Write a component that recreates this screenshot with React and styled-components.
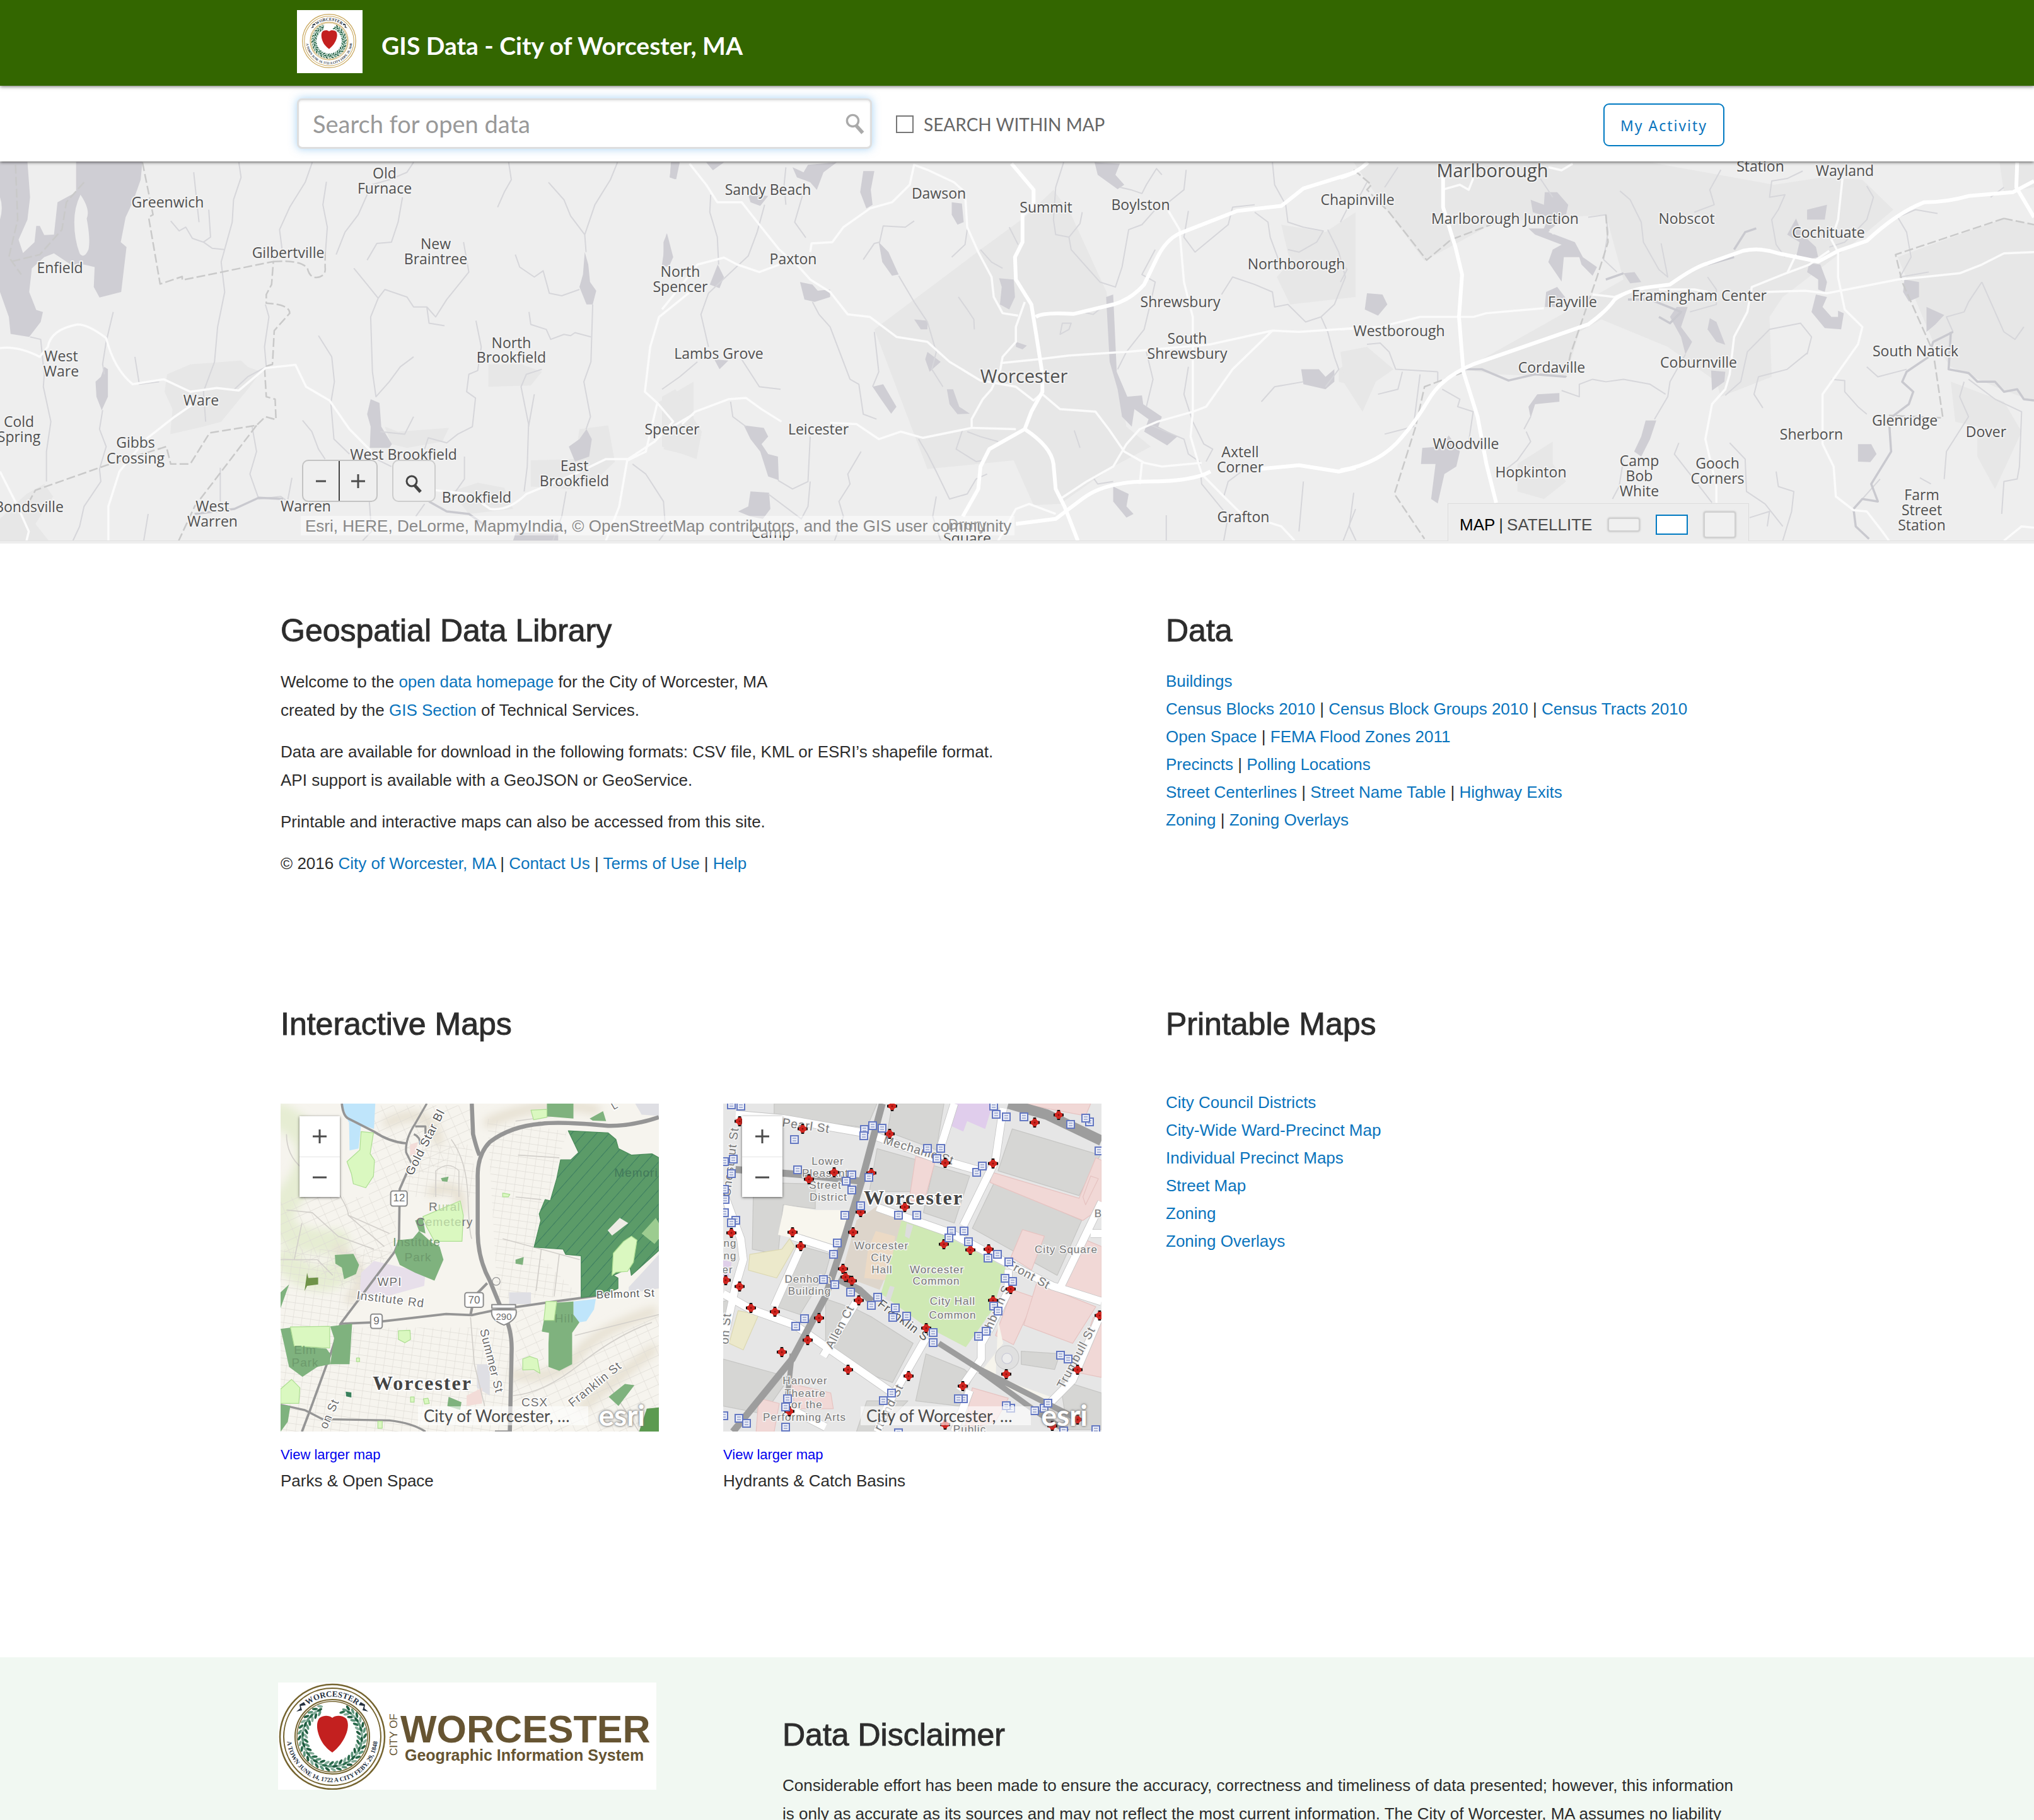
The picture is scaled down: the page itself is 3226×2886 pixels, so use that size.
import React from "react";
import styled, { createGlobalStyle } from "styled-components";

const sans = `"Liberation Sans", Arial, sans-serif`;
const humanist = `Lato, "Open Sans", sans-serif`;
const mapFont = `"Open Sans", "Noto Sans", sans-serif`;

const GlobalStyle = createGlobalStyle`
  *, *::before, *::after { box-sizing: border-box; }
  body { margin: 0; background: #fff; color: #2c2c2c; font-family: ${sans}; font-size: 26px; line-height: 44px; }
  button, input { font: inherit; color: inherit; }
  h1, h2, p, ul, figure { margin: 0; padding: 0; }
`;

const Page = styled.div`
  height: 100vh;
  overflow: auto;
  scrollbar-width: none;
`;

const Container = styled.div`
  width: 100%;
  max-width: 2336px;
  margin: 0 auto;
  padding: 0 ${(p) => p.$inset || 0}px;
`;

const TopBar = styled.header`
  position: relative;
  background: #336600;
  box-shadow: 0 1px 6px rgba(0, 0, 0, 0.6);
  z-index: 2;
`;

const Brand = styled(Container)`
  display: flex;
  align-items: center;
  gap: 30px;
  height: 136px;
`;

const BrandLogo = styled.svg`
  display: block;
  width: 104px;
  height: 100px;
  background: #fff;
  margin-bottom: 4px;
`;

const BrandTitle = styled.h1`
  color: #fff;
  font: 700 39px/48px ${humanist};
  padding-top: 8px;
`;

const SearchBar = styled.div`
  position: relative;
  background: #fff;
  box-shadow: 0 1px 5px rgba(0, 0, 0, 0.7);
  z-index: 1;
`;

const SearchRow = styled(Container)`
  display: flex;
  align-items: center;
  height: 120px;
`;

const SearchBox = styled.label`
  display: flex;
  align-items: center;
  width: 912px;
  height: 80px;
  padding: 0 6px 0 22px;
  border: 3px solid #dedede;
  border-radius: 8px;
  box-shadow: 0 0 14px rgba(82, 168, 236, 0.5), inset 0 2px 3px rgba(0, 0, 0, 0.06);
  background: #fff;
`;

const SearchInput = styled.input`
  flex: 1;
  border: 0;
  outline: 0;
  padding: 0;
  background: none;
  font: 400 38px/48px ${humanist};
  color: #555;
  &::placeholder { color: #999; opacity: 1; }
`;

const Within = styled.label`
  display: flex;
  align-items: center;
  gap: 16px;
  margin-left: 38px;
  padding-top: 2px;
  font: 400 28px/36px ${humanist};
  color: #666;
`;

const Tick = styled.input`
  appearance: none;
  width: 28px;
  height: 28px;
  margin: 0;
  border: 2px solid #777;
  background: #fff;
`;

const Activity = styled.button`
  width: 192px;
  height: 68px;
  margin: 4px 20px 0 auto;
  padding: 2px 0 0;
  border: 2px solid #007ac2;
  border-radius: 9px;
  background: #fff;
  color: #0a74bd;
  font: 400 23px/32px "Noto Sans", sans-serif;
  letter-spacing: 2px;
`;

const MapHero = styled.section`
  position: relative;
  height: 606px;
  background: #eee;
  overflow: hidden;
`;

const HeroMap = styled.svg`
  display: block;
  width: 100%;
  height: 602px;
  border-bottom: 1px solid #e2e2e2;
`;

const HeroOverlay = styled.div`
  position: absolute;
  inset: 0;
`;

const HeroTools = styled(Container)`
  display: flex;
  justify-content: space-between;
  align-items: flex-end;
  height: 602px;
  padding: 0 7px 0 32px;
`;

const LeftTools = styled.div`
  display: flex;
  flex-direction: column;
  gap: 22px;
  padding-bottom: 9px;
`;

const ToolRow = styled.div`
  display: flex;
  gap: 23px;
  padding-left: 2px;
`;

const ButtonPair = styled.div`
  display: flex;
  border: 2px solid #c3c3c3;
  border-radius: 10px;
  background: rgba(238, 238, 238, 0.85);
`;

const PairButton = styled.button`
  width: 58px;
  height: 63px;
  padding: 0;
  border: 0;
  background: none;
  &:first-child { border-right: 2px solid #444; }
  svg { display: block; margin: auto; }
`;

const LocateButton = styled.button`
  width: 69px;
  height: 67px;
  padding: 8px 0 0;
  border: 2px solid #cdcdcd;
  border-radius: 10px;
  background: rgba(238, 238, 238, 0.85);
  svg { display: block; margin: auto; }
`;

const Attribution = styled.p`
  padding: 2px 5px 0 7px;
  background: rgba(255, 255, 255, 0.45);
  color: #888;
  font: 400 26px/29px ${sans};
`;

const Basemap = styled.div`
  display: flex;
  align-items: center;
  width: 478px;
  height: 60px;
  padding: 6px 0 0 18px;
  border: 1px solid #dcdcdc;
  border-bottom: 0;
  background: #ededed;
  font: 400 26px/32px ${sans};
`;

const BasemapButton = styled.button`
  padding: 0;
  border: 0;
  background: none;
  color: ${(p) => (p.$active ? "#000" : "#4c4c4c")};
`;

const Bar = styled.span`
  padding: 0 6px;
`;

const SizeButton = styled.button`
  width: 51px;
  height: ${(p) => p.$h}px;
  margin-left: 25px;
  padding: 0;
  border: ${(p) => (p.$active ? "2px solid #007ac2" : "2px solid #d0d0d0")};
  border-radius: ${(p) => (p.$active ? 0 : 4)}px;
  background: ${(p) => (p.$active ? "#fff" : "#f0f0f0")};
  box-shadow: ${(p) => (p.$active ? "none" : "0 0 3px #b4b4b4")};
`;

const Columns = styled.div`
  display: grid;
  grid-template-columns: 1302fr 932fr;
  column-gap: 102px;
  align-items: start;
  padding-top: 110px;
  min-height: ${(p) => p.$min}px;
`;

const Heading = styled.h2`
  font: 400 50px/56px ${sans};
  -webkit-text-stroke: 1px #323232;
  margin-bottom: ${(p) => p.$after}px;
`;

const Para = styled.p`
  line-height: 45px;
  & + & { margin-top: 21px; }
`;

const Link = styled.a`
  color: #0a74bd;
  text-decoration: none;
`;

const LinkList = styled.ul`
  list-style: none;
`;

const Cards = styled.div`
  display: grid;
  grid-template-columns: 1fr 1fr;
  column-gap: 102px;
`;

const MapFrame = styled.div`
  position: relative;
  height: 520px;
  overflow: hidden;
  background: #f5f3ee;
`;

const CardMap = styled.svg`
  display: block;
  width: 100%;
  height: 100%;
`;

const ZoomStack = styled.div`
  position: absolute;
  left: 30px;
  top: 20px;
  width: 64px;
  background: #fff;
  box-shadow: 0 1px 4px rgba(0, 0, 0, 0.6);
`;

const ZoomButton = styled.button`
  display: flex;
  align-items: center;
  justify-content: center;
  width: 64px;
  height: 64px;
  padding: 0;
  border: 0;
  background: #fff;
  & + & { border-top: 1px solid #e4e4e4; }
`;

const Credit = styled.div`
  position: absolute;
  right: 112px;
  bottom: 10px;
  width: 270px;
  padding-left: 9px;
  background: rgba(255, 255, 255, 0.6);
  color: #4c4c4c;
  font: 400 26px/30px ${humanist};
`;

const EsriMark = styled.span`
  position: absolute;
  right: 22px;
  bottom: 2px;
  color: #fff;
  font: 700 46px/48px ${humanist};
  text-shadow: 0 0 4px #777, 0 0 3px #888;
`;

const Larger = styled.a`
  display: block;
  margin-top: 20px;
  color: #0000ee;
  text-decoration: none;
  font: 400 22px/34px ${sans};
`;

const Caption = styled.figcaption`
  margin-top: 2px;
`;

const Foot = styled.footer`
  background: #f1f8f2;
`;

const FootRow = styled(Container)`
  display: grid;
  grid-template-columns: 600px 1fr;
  column-gap: 200px;
  align-items: start;
  max-width: 2344px;
`;

const FootLogo = styled.svg`
  display: block;
  width: 600px;
  height: 170px;
  margin-top: 40px;
  background: #fff;
`;

const FootText = styled.div`
  padding-top: 95px;
`;

/* ---------- drawings ---------- */

const Plus = () => (
  <svg width="24" height="24" viewBox="0 0 24 24" aria-hidden="true">
    <path d="M12 1V23M1 12H23" stroke="#4c4c4c" strokeWidth="3" fill="none" />
  </svg>
);
const Minus = ({ w = 24 }) => (
  <svg width={w} height="24" viewBox={`0 0 ${w} 24`} aria-hidden="true">
    <path d={`M1 12H${w - 1}`} stroke="#4c4c4c" strokeWidth="3" fill="none" />
  </svg>
);
const Lens = ({ color, size = 30 }) => (
  <svg width={size} height={size} viewBox="0 0 30 30" aria-hidden="true">
    <circle cx="11" cy="11" r="8" fill="none" stroke={color} strokeWidth="3" />
    <path d="M16 18L25 28" stroke={color} strokeWidth="5" fill="none" />
  </svg>
);

const leaves = Array.from({ length: 96 }, (_, i) => {
  const ring = i % 3;
  const a = ((-68 + (i / 95) * 316) * Math.PI) / 180;
  const r = 42 + ring * 5;
  return { x: 86 + r * Math.cos(a), y: 86 + r * Math.sin(a), t: (a * 180) / Math.PI + 50 + ring * 35, c: i % 4 };
});

const Seal = ({ id, ring }) => (
  <g>
    <circle cx="86" cy="86" r="83" fill="#fff" stroke={ring} strokeWidth="2.5" />
    <circle cx="86" cy="86" r="77" fill="none" stroke={ring} strokeWidth="2" />
    <circle cx="86" cy="86" r="59" fill="none" stroke={ring} strokeWidth="2" />
    <circle cx="86" cy="86" r="56" fill="none" stroke={ring} strokeWidth="1.5" />
    {leaves.map((l, i) => (
      <ellipse key={i} cx={l.x} cy={l.y} rx="4.6" ry="2" transform={`rotate(${l.t} ${l.x} ${l.y})`} fill={["#2a6b4c", "#5e957c", "#1f5c40", "#86ae9b"][l.c]} />
    ))}
    <path d="M86 56C80 51 70 52 65 57C58 68 64 87 73 99C78 105 82 108 86 111C91 107 95 103 99 98C108 86 115 68 108 57C102 52 92 51 86 56Z" fill="#c3201f" />
    <path id={`${id}-top`} d="M22.5 86A63.5 63.5 0 0 1 149.5 86" fill="none" />
    <path id={`${id}-low`} d="M22 53A72 72 0 1 0 150 53" fill="none" />
    <g fontFamily="Liberation Serif, serif" fontWeight="700" fill="#26313f" textAnchor="middle">
      <text fontSize="13"><textPath href={`#${id}-top`} startOffset="50%">WORCESTER</textPath></text>
      <text fontSize="10"><textPath href={`#${id}-low`} startOffset="50%">A TOWN JUNE 14, 1722 A CITY FEBY. 29, 1848</textPath></text>
      <path d="M29 46l9-2-2-7 8-1-3-5-7 4 1 6zM143 46l-9-2 2-7-8-1 3-5 7 4-1 6z" />
    </g>
  </g>
);

/* Each sheet of the regional basemap is digitised on its own grid. */
const SX = 1100 / 1568;
const SY = 620 / 1568;
const sheets = [
  {
    ox: 0,
    urban: [
      "M372 940L378 870L430 830L545 815L560 840L590 860L560 930L500 1060L460 1080L385 1110L390 1010Z",
      "M1104 830L1180 830L1225 860L1200 915L1104 920Z",
      "M870 1080L900 1100L1015 1085L1000 1140L920 1165L885 1150Z",
      "M1200 1215L1300 1210L1310 1090L1375 1075L1390 1220L1350 1290L1290 1330L1200 1320Z",
      "M0 1450L60 1350L100 1310L120 1360L80 1470L110 1537L0 1537Z",
      "M1020 1340L1080 1305L1140 1325L1160 1410L1060 1430Z",
      "M1486 985L1568 900V1200L1500 1170L1525 1050Z",
    ],
    water: [
      "M0 18L62 18L68 160L62 250L42 330L52 384L78 340L82 275L90 275L100 312L122 310L130 180L172 140L172 18L322 18L318 90L300 180L284 240L273 340L286 360L274 540L225 562L212 520L214 440L190 430L160 430L122 385L100 400L72 445L66 540L82 612L97 620L92 660L66 720L24 708L20 640L0 540Z",
      "M236 840L244 850L244 960L230 1014L218 960L216 900L228 880Z",
      "M838 970L858 985L862 1080L886 1150L880 1165L836 1165L838 1080L830 1030Z",
      "M1326 1090L1338 1130L1332 1200L1300 1220L1286 1160L1310 1130Z",
      "M1322 380L1330 430L1334 500L1348 535L1340 590L1326 590L1310 520L1318 470Z",
      "M1508 305L1522 400L1512 440L1500 430L1500 340Z",
      "M1518 20L1536 20L1526 88L1514 80Z",
      "M1160 1537L1166 1505L1262 1510L1262 1537Z",
    ],
    isles: ["M182 150Q205 210 196 245Q205 330 200 370Q190 410 180 385Q168 330 168 260Q168 200 182 150Z", "M0 160Q8 200 0 250Z"],
    streams: [
      "M540 20L545 80L528 170L525 260L500 420L508 540L492 680L485 820L460 940L465 1060",
      "M706 20L690 100L655 200L632 290L640 400M738 98L730 190L740 280L735 400",
      "M935 20L920 60L880 90L840 110L810 230L780 300L760 390M910 160L900 260L885 340L852 345L830 412",
      "M438 60L445 180L450 260M472 210L476 320L460 340M386 255L405 295L420 280L435 325L460 340L480 365L508 370",
      "M1150 20L1156 90L1140 140L1125 200M1396 20L1380 90L1345 190L1322 310L1290 235L1275 170L1240 100M1322 310L1325 380M1340 590L1336 820L1320 900L1335 1040L1325 1090",
      "M800 445L830 510L855 565L838 640L842 860L850 960L880 900L905 840L935 800M855 565L870 530L920 560L935 600L965 600L985 640L1010 570L1060 460L1048 340M965 600L970 665L1005 675",
      "M1165 390L1175 440L1208 480L1228 455L1242 545L1270 555L1310 530M1196 620L1200 670L1235 690L1245 730L1275 710L1290 715L1300 703L1336 720",
      "M1076 655L1088 760L1080 855L1060 870L1055 940L1075 965L1068 1080L1035 1110L1010 1145L968 1125L960 1170",
      "M1225 850L1190 870L1178 920L1195 1070L1192 1240L1185 1340M1208 950L1195 1080",
      "M256 620L240 740L232 830L236 870M232 1014L225 1090L240 1160L225 1250L228 1300L190 1400L180 1480L165 1537",
      "M68 720L92 730L100 870L98 920L115 1060L105 1180L105 1300",
      "M305 800L315 910L360 900M720 715L750 800L756 900L748 985L755 1130L790 1190M684 1055L705 1100L720 1170L735 1210M600 590L608 640L598 760L602 840L560 880L530 930",
      "M498 1245L498 1380M570 1080L580 1180L565 1270L585 1370L635 1360L650 1380L660 1285M335 1430L325 1537",
      "M860 1100L915 1110L935 1040M850 1210L885 1240M1050 1200L1050 1290L1030 1340M835 1380L840 1500L820 1537M1280 1340L1270 1440L1250 1537M1430 1230L1460 1270L1500 1380L1505 1500L1490 1537M970 1380L1010 1420L1060 1430M940 1440L960 1390",
    ],
    rivers: ["M440 1430L530 1410L585 1365L640 1370", "M970 1380L1010 1420L1060 1430L1100 1480"],
    boundary: [
      "M322 20L346 230L336 240L362 508L412 478L412 492L618 418L614 510L602 550L602 585Q655 590 655 625L620 695L616 830L598 840L602 960L622 970L624 1052L600 1040L580 1075L474 1105L430 1230L386 1230L376 1160L240 1235L80 1335L60 1400",
      "M580 1075L440 1400L404 1537",
      "M618 418Q680 410 695 445Q700 482 715 482Q738 478 735 440L735 370",
      "M35 30L40 250L20 400L48 470M190 100L150 180L140 290L90 390L20 420",
    ],
    roads: [
      "M0 765Q40 755 90 800L108 760Q115 690 175 670Q200 670 240 725Q258 850 300 910L370 890L430 940L490 925L540 935L600 845L668 832L692 920L745 975L790 1090L840 1180",
      "M440 985L395 1040L330 1130L270 1260L245 1400L245 1537M0 1260L40 1400L65 1500L60 1537",
      "M985 1335L1060 1350L1108 1410Q1150 1420 1190 1350L1300 1270L1370 1210L1420 1210L1480 1140L1522 1060L1486 985L1458 940L1470 760L1490 640L1560 540M1418 1215L1400 1400L1370 1537M1486 985L1460 1180L1420 1215M1500 1100L1568 1030",
    ],
    highways: [],
    labels: [
      [869, 82, "Old"], [869, 142, "Furnace"], [379, 197, "Greenwich"], [652, 400, "Gilbertville"], [985, 365, "New"], [985, 426, "Braintree"],
      [135, 460, "Enfield"], [138, 815, "West"], [138, 876, "Ware"], [1156, 760, "North"], [1156, 820, "Brookfield"], [455, 991, "Ware"],
      [43, 1078, "Cold"], [43, 1137, "Spring"], [306, 1162, "Gibbs"], [306, 1224, "Crossing"], [912, 1210, "West Brookfield"],
      [1298, 1255, "East"], [1298, 1315, "Brookfield"], [1078, 1382, "Brookfield"], [481, 1416, "West"], [481, 1477, "Warren"],
      [692, 1416, "Warren"], [66, 1420, "Bondsville"],
    ],
  },
  {
    ox: 1050,
    urban: [
      "M885 130L925 230L1005 540L1030 900L1050 1080L1105 1160L1020 1240L900 1390L840 1395L795 1215L600 1250L570 1110L480 690L720 370L820 240Z",
      "M1400 270L1500 300L1568 220V560L1420 590L1390 480L1420 420Z",
      "M0 960L30 930L90 1100L78 1210L0 1160Z",
      "M1530 850L1568 800V920L1530 900Z",
    ],
    water: [
      "M100 20L140 20L115 52Z", "M20 20L40 20L32 88L18 80Z",
      "M295 40L320 60L330 30L395 20L365 60L350 130L335 100L305 80Z",
      "M455 55L480 55L472 130L476 190L462 205L448 140Z",
      "M655 180L678 185L682 260L668 270L655 230Z",
      "M490 340L512 380L535 470L520 475L498 420Z",
      "M312 500L340 510L352 535L380 530L380 560L345 580L322 570Z",
      "M762 485L795 490L798 560L785 610L764 590L768 520Z",
      "M978 20L1035 25L1025 70L1045 110L1030 128L985 70Z",
      "M10 305L22 400L12 440L0 430Z", "M126 430L140 480L130 525L108 510Z",
      "M476 920L500 910L530 1000L518 1028L495 970Z",
      "M644 930L658 930L672 1000L696 1028L668 1030L650 990Z",
      "M185 1075L230 1085L240 1120L225 1150L240 1190L262 1200L264 1295L240 1280L222 1180L200 1130Z",
      "M200 1340L242 1345L245 1410L228 1450L200 1440L172 1420L195 1400Z",
      "M1004 560L1020 550L1028 860L1052 960L1085 955L1088 990L1130 1040L1122 1080L1165 1120L1142 1155L1090 1100L1100 1050L1068 1010L1062 1080L1040 1040L1030 930L1012 820Z",
      "M1445 850L1485 850L1500 880L1520 850L1520 900L1500 930L1450 910Z",
      "M1020 1320L1055 1350L1050 1400L1066 1430L1050 1445L1020 1380Z",
      "M570 650L600 655L600 690L585 690ZM600 780L630 820L605 860L595 810ZM800 740L825 755L815 770L800 760Z",
      "M118 810L150 815L130 850Z", "M195 150L240 155L222 195L200 180Z",
    ],
    isles: [],
    streams: [
      "M110 150L108 220L125 320L128 430M232 190L215 300L195 395L150 470L105 545L88 630L105 760M280 40L276 110L280 190M318 150L300 260L325 322",
      "M455 410L480 345L492 340L500 275L550 280L570 255M535 475L570 580L600 660L620 780L610 850L635 920M340 580L355 630L380 680L425 890L445 910L455 1030L485 1050",
      "M785 280L805 350M690 290L685 350L655 400M720 370L745 420L770 445M670 560L690 610L705 650L706 690",
      "M908 20L890 120L885 250L890 310L920 320L945 265L950 220M920 320L925 370L960 440L990 500L1025 520L1040 440L1055 290L1085 270L1120 200",
      "M1035 120L1060 130L1085 145L1095 110L1118 45L1130 70M1185 50L1180 130L1145 180M1190 215L1180 320L1205 380L1280 270L1290 200L1340 190M1115 370L1085 470L1115 500L1105 580L1090 690L1050 780L1030 850",
      "M1380 20L1385 110L1410 190L1415 260L1450 280L1495 295L1480 340L1440 380L1415 370M1340 220L1370 260L1375 320L1400 440M1505 290L1530 380L1545 480L1520 590L1490 640L1455 660L1415 590L1385 600L1380 540L1340 510L1290 480L1265 550",
      "M1490 640L1505 700L1520 800L1530 850L1500 920M1355 980L1385 920L1450 900M1190 840L1180 950L1200 1060L1225 1150L1245 1170L1230 1220",
      "M155 980L160 1040L190 1080M80 820L40 880L0 930M180 810L220 920L268 930M262 1295L295 1330L330 1300L335 1120M335 1300L330 1400L315 1450L240 1350M450 1180L420 1270L425 1310L400 1380L410 1440L390 1537",
      "M580 1130L600 1190L620 1260L650 1370L690 1350L710 1290L735 1270M680 1090L665 1170L710 1220L725 1215M690 1100L720 1120L760 1140M932 1095L945 1165",
      "M975 1285L985 1310L1020 1300M1100 1070L1180 1130L1190 1190L1215 1220L1220 1310L1280 1440L1270 1537M1310 1260L1280 1300L1270 1360M620 1360L612 1440L630 1537M1140 1435V1537M1450 1300L1440 1500M1568 1410L1540 1537",
      "M905 665L925 665L920 690L900 710ZM1095 780L1110 890L1095 1000M950 620L975 630L995 600M480 700L490 860L476 920",
    ],
    rivers: [],
    boundary: [],
    roads: [
      "M62 25L100 110L125 180L180 180L220 270L265 370L310 440L335 490L380 540L420 630L470 640L530 720L600 740L650 820L720 895L800 920L840 975L860 945",
      "M0 610Q50 500 80 430L140 402L170 430L220 460L265 430M335 380L338 345L385 340L410 280L470 205L520 180L560 110L570 30L600 50L660 100L685 140L690 280L715 380L745 480L750 560L770 625L805 635",
      "M820 580L800 680L800 740L770 800L765 850L745 930L725 970L700 1050L700 1085L590 1125L540 1100L490 1130L440 1070L380 1065M45 1070L75 1020L150 970L190 965L225 1010L270 1060",
      "M765 825L850 810L920 795L1050 780L1240 750L1380 695L1440 700L1568 685M1380 695L1290 850L1230 1000L1200 1020L1120 1060L1080 1090L1050 1150L1020 1240L960 1300L900 1370",
      "M1145 215L1170 290L1180 500L1200 640L1200 1020M700 1085L800 1090M860 950L900 1010L980 1020L1010 1090L1045 1180L1090 1225L1130 1240L1220 1225M1200 1020L1195 1120L1220 1270L1270 1360L1310 1430L1400 1480L1430 1537M1085 1225L1080 1310",
      "M760 1537L800 1410L830 1390L890 1430",
    ],
    highways: [
      "M790 25L840 130L840 190L815 230L815 340L798 400L800 490L835 590L845 700L860 870L860 940L835 1020L820 1090Q880 1160 885 1230L890 1330L910 1400L940 1537",
      "M820 1090L740 1170L720 1240L715 1330L680 1440",
      "M845 640Q860 620 930 628L1020 590Q1060 570 1090 510L1120 400Q1140 330 1170 305L1300 215L1400 195L1450 125L1568 60",
      "M800 1470L890 1450L950 1370Q1000 1300 1100 1300Q1200 1300 1240 1260M1350 1250L1440 1235L1530 1260L1568 1245",
    ],
    labels: [
      [240, 147, "Sandy Beach"], [626, 163, "Dawson"], [868, 218, "Summit"], [1082, 208, "Boylston"], [296, 426, "Paxton"], [41, 476, "North"], [41, 537, "Spencer"],
      [1434, 444, "Northborough"], [1172, 597, "Shrewsbury"], [1187, 743, "South"], [1187, 805, "Shrewsbury"], [129, 804, "Lambs Grove"],
      [818, 900, "Worcester", 29], [23, 1107, "Spencer"], [354, 1107, "Leicester"], [1307, 1198, "Axtell"], [1307, 1259, "Corner"],
      [1314, 1460, "Grafton"], [247, 1522, "Camp"], [690, 1490, "Drury"], [690, 1546, "Square"],
    ],
  },
  {
    ox: 2126,
    urban: [
      "M30 20L700 20L980 110L1090 80L1180 90L1250 210L1170 330L1000 560L970 640L975 880L860 960L850 900L740 760L590 650L540 700L510 880L350 870L280 850L640 490L600 230L420 250L340 270L190 415L100 200Z",
      "M1290 380L1500 245L1568 270V980L1480 920L1380 840L1340 740L1260 400Z",
      "M0 780L60 760L120 850L80 900L50 1020L10 910Z",
      "M1380 900L1500 980L1540 1100L1480 1330L1440 1200L1440 1080L1390 1060Z",
      "M400 1230L480 1140L480 1230L510 1300L460 1370L400 1340Z",
      "M1490 20L1568 20V120L1500 140Z",
    ],
    water: [
      "M430 170L460 190L462 140L490 140L515 190L510 230L470 300L500 320L530 340L548 400L580 440L570 475L545 430L540 400L505 400L500 498L470 420L480 370L500 350L440 310L425 285L460 285L470 240L435 220Z",
      "M60 545L95 550L106 590L85 635L55 610Z",
      "M465 540L490 520L512 570L500 600L462 600Z",
      "M1055 210L1100 190L1095 250L1055 250Z",
      "M1030 245L1045 310L1075 360L1080 400L1055 410L1030 400L1038 340L1010 310Z",
      "M1060 425L1085 430L1100 500L1095 540L1080 530L1080 490L1055 460Z",
      "M1075 550L1100 560L1090 600L1110 640L1125 640L1125 615L1138 625L1132 690L1095 685L1065 620Z",
      "M835 645L850 660L870 752L850 740L830 690Z", "M838 855L870 860L868 900L840 935Z",
      "M1275 490L1308 500L1308 560L1285 578L1272 540Z", "M1325 600L1365 632L1345 670L1325 700Z",
      "M690 1055L714 1055L700 1130L680 1200L664 1180L680 1120Z",
      "M445 950L495 945L495 980L440 990L430 1045L425 1000Z",
      "M185 1165L225 1160L245 1115L270 1180L262 1240L235 1270L220 1388L205 1370L215 1230L182 1230Z",
      "M1170 1150L1200 1150L1212 1190L1198 1222L1170 1220Z",
      "M745 640L760 600L785 600L770 680L795 740L780 790L770 720Z", "M640 465L665 460L680 500L655 505Z",
    ],
    isles: ["M472 290L486 275L495 300L480 310Z"],
    streams: [
      "M632 135L655 170L680 260L685 340L720 450L740 480L725 345M560 240L600 230L605 300L595 410L625 460",
      "M860 50L835 130L845 190L800 220M780 790L745 900L740 960L710 1050M1045 55L1010 85L975 95L970 160L1005 150L990 210L975 250L985 350L1005 400",
      "M1190 115L1205 160L1190 250L1140 340L1105 360M830 480L850 530L850 590L790 620",
      "M60 750L90 745L110 780L125 850L220 860M140 860L130 930L85 950M180 870L165 1080L100 1110M220 860V900M230 930L270 970L265 1000L300 1020L290 1140",
      "M420 1100L430 1140L400 1215L375 1250M415 1090L430 1040M500 935L540 960L540 910L570 890L600 900L640 890L700 910L735 950",
      "M1055 785L1010 850L945 880L935 950L955 1005M870 955L905 900L920 780L970 690L1040 665L1065 720L1055 790M765 1145L755 1190L790 1270L840 1385",
      "M880 1145L915 1210L918 1340L960 1390L1000 1480M985 1260L990 1320L1025 1340L1020 1420L1000 1537M1110 890L1140 895L1140 940L1170 1000L1190 1030M1190 840L1215 880L1280 850M1220 1290L1180 1370",
      "M1410 900L1400 960L1420 1040L1370 1180L1365 1290M1420 890L1480 970L1540 1020L1535 1240L1530 1290L1500 1300L1495 1430M1450 500L1420 580L1410 620L1370 640L1385 700M1450 500L1500 700L1525 730L1545 680",
      "M1350 225L1300 210L1260 240L1280 300L1290 400L1265 480L1330 460M130 40L100 120M60 100L45 150L20 190L0 260M30 1345L20 1480L35 1537M925 1445L970 1420L965 1480M1310 1285L1335 1310",
      "M0 500L15 450L5 430M450 80L480 160M1470 160L1500 120M640 1210L630 1320L615 1370",
    ],
    rivers: [
      "M1385 700L1340 740L1330 800L1280 860L1270 900L1295 940L1285 990L1240 1050L1245 1180L1200 1310L1215 1380L1180 1370L1160 1410L1165 1480L1195 1530",
      "M1380 700L1375 850L1420 865L1440 900L1480 900L1500 940L1530 930L1545 970L1568 975",
      "M720 640L745 665L770 620L700 570L650 570M890 400L830 430M940 285L915 300L890 370M600 490L640 465",
      "M280 850L320 850L380 895L440 870L510 880",
    ],
    boundary: [
      "M30 50L70 110L60 130L110 220L195 412L250 330L340 270M600 230L605 340L580 480L520 790L510 880M280 860L190 920L170 1080L122 1350L190 1530",
      "M1500 245L1255 390L1270 500L1340 780L1362 1045L1240 1035M1500 245L1568 270",
    ],
    roads: [
      "M0 690L90 680L180 640L300 640L330 625L460 605M570 550L620 560L640 545M960 540L1050 535L1100 545L1160 525L1260 490L1400 465L1450 430L1500 385L1568 380",
      "M1135 85L1125 250L1110 330L1125 380L1125 480L1140 610L1180 680L1170 750L1110 900L1090 950L1090 1150L1115 1240L1120 1360L1160 1415L1190 1420L1225 1500L1240 1537",
      "M1105 375L1060 430L1000 470L930 520L920 620L890 720L880 870L870 930L840 990L825 1130L850 1320L850 1385M1500 1537L1540 1480L1568 1485M230 130L270 110L290 130L300 85M1030 390L1010 465M470 40L500 52L525 25M720 530L800 530L830 540",
    ],
    highways: [
      "M0 82Q40 60 62 20", "M232 75L232 200L260 360L275 470L268 640L278 860L310 1040L330 1230L352 1385",
      "M0 1255Q90 1230 140 1120Q170 1060 200 970Q230 880 300 830L560 670Q600 620 620 570Q650 530 700 520L745 510Q800 440 830 425L910 375Q950 360 990 385L1080 418L1125 375L1190 335Q1260 220 1320 180Q1370 180 1420 155L1520 140L1568 95",
      "M1530 20L1528 120L1568 240",
    ],
    labels: [
      [343, 75, "Marlborough", 29], [949, 52, "Station"], [1141, 70, "Wayland"], [38, 187, "Chapinville"], [372, 262, "Marlborough Junction"],
      [783, 262, "Nobscot"], [1103, 319, "Cochituate"], [525, 597, "Fayville"], [811, 571, "Framingham Center"], [132, 713, "Westborough"],
      [477, 860, "Cordaville"], [809, 840, "Coburnville"], [1300, 794, "South Natick"], [284, 1167, "Woodville"], [430, 1280, "Hopkinton"],
      [676, 1234, "Camp"], [676, 1295, "Bob"], [676, 1356, "White"], [852, 1244, "Gooch"], [852, 1305, "Corners"], [1065, 1128, "Sherborn"],
      [1276, 1072, "Glenridge"], [1459, 1118, "Dover"], [1314, 1370, "Farm"], [1314, 1431, "Street"], [1314, 1492, "Station"],
    ],
  },
];

const layers = [
  ["urban", { fill: "#e7e7e7" }],
  ["water", { fill: "#cfced4" }],
  ["isles", { fill: "#eeeeee" }],
  ["streams", { fill: "none", stroke: "#d6d6da", strokeWidth: 2 }],
  ["rivers", { fill: "none", stroke: "#c9c9cf", strokeWidth: 3.5 }],
  ["boundary", { fill: "none", stroke: "#c9c9c9", strokeWidth: 2.5, strokeDasharray: "14 5" }],
  ["roads", { fill: "none", stroke: "#fbfbfb", strokeWidth: 3.5 }],
  ["highways", { fill: "none", stroke: "#ffffff", strokeWidth: 6 }],
];

const RegionMap = () => (
  <HeroMap viewBox="0 0 3226 602" preserveAspectRatio="xMidYMid slice" role="img" aria-label="Map of the Worcester region">
    {layers.map(([name, style]) =>
      sheets.map((s) => (
        <g key={name + s.ox} transform={`translate(${s.ox} -6) scale(${SX} ${SY})`} strokeLinejoin="round" {...style}>
          {s[name].map((d, i) => <path key={i} d={d} vectorEffect="non-scaling-stroke" />)}
        </g>
      ))
    )}
    <g fontFamily={mapFont} fill="#505050" textAnchor="middle" stroke="#f2f2f2" strokeWidth="4" paintOrder="stroke" strokeLinejoin="round">
      {sheets.map((s) => s.labels.map(([x, y, t, size]) => (
        <text key={t + x + y} x={Math.round(s.ox + x * SX)} y={Math.round(y * SY - 5)} fontSize={size || 23}>{t}</text>
      )))}
    </g>
  </HeroMap>
);

const CX = 640 / 1568;
const CY = 650 / 1568;
const at = (ox) => (x, y) => [Math.round((x - ox) * CX), Math.round((y - 43) * CY)];

const MapText = ({ place, x, y, size = 19, rotate = 0, anchor = "middle", children, ...rest }) => {
  const [px, py] = place(x, y);
  return (
    <text x={px} y={py} fontSize={size} textAnchor={anchor} transform={rotate ? `rotate(${rotate} ${px} ${py})` : undefined} {...rest}>
      {children}
    </text>
  );
};

const ParksMap = () => {
  const p = at(37);
  return (
    <CardMap viewBox="0 0 600 520" preserveAspectRatio="xMidYMid slice" role="img" aria-label="Map of parks and open space">
      <defs>
        <pattern id="hatch" width="36" height="36" patternUnits="userSpaceOnUse" patternTransform="rotate(42)">
          <rect width="36" height="36" fill="#5b9b68" />
          <path d="M1 0V36" stroke="#3c7d60" strokeWidth="3" />
        </pattern>
        <pattern id="blocks" width="34" height="27" patternUnits="userSpaceOnUse" patternTransform="rotate(8)">
          <path d="M0 0H34M0 0V27" stroke="#dedbd5" strokeWidth="3" fill="none" />
        </pattern>
        <pattern id="blocks2" width="46" height="34" patternUnits="userSpaceOnUse" patternTransform="rotate(-24)">
          <path d="M0 0H46M0 0V34" stroke="#dedbd5" strokeWidth="3" fill="none" />
        </pattern>
        <filter id="soft"><feGaussianBlur stdDeviation="7" /></filter>
      </defs>
      <rect width="600" height="520" fill="#f6f4ee" />
      <g filter="url(#soft)" fill="none" strokeLinecap="round">
        <path d="M0 20Q80 60 20 140T90 220M10 250Q60 300 100 260" stroke="#e6edd3" strokeWidth="40" />
        <path d="M170 30Q240 0 250 60M240 140Q290 120 285 170M90 230Q150 270 110 310M330 30Q420 -10 500 10M370 430Q440 440 470 400T590 330M480 480L590 390" stroke="#e6e0d1" strokeWidth="16" />
      </g>
      <g transform={`scale(${CX} ${CY}) translate(-37 -43)`} strokeLinejoin="round">
        <path d="M37 600L480 600L300 850L240 1300L37 1300ZM250 900L940 900L930 1298L150 1298ZM840 100L1150 150L1020 600L1200 780L880 790ZM520 200L780 200L800 400L520 400Z" fill="url(#blocks)" />
        <path d="M37 400L480 400L490 600L300 760L37 600ZM380 50L780 50L780 200L520 350L380 500ZM940 1100L1507 850V1298H940ZM950 830L1060 830L1060 1080L950 1080Z" fill="url(#blocks2)" />
        <path d="M350 690L400 645L600 690L595 740L450 780L345 770Z" fill="#e7dfea" />
        <path d="M1390 745L1507 620L1507 750L1390 770ZM800 1040L850 1040L850 1160L800 1130ZM925 765H1010V810H925ZM1415 43H1507V90L1440 85Z" fill="#dfdfe4" />
        <path d="M540 200L570 190L560 240L540 240ZM760 1160L820 1130L820 1190L760 1200Z" fill="#f3dcd8" />
        <g fill="#bfe5fb">
          <path d="M275 43H405L400 140L340 120L300 112L290 85Z" /><path d="M303 112L350 125L340 215L305 222Z" />
          <path d="M1175 800L1262 790L1255 830L1225 875L1195 880L1175 850Z" />
        </g>
        <g fill="none" stroke="#d2cfca" strokeWidth="4">
          <path d="M60 160Q60 240 120 290Q200 300 250 370T300 470L440 590M60 450L160 460L260 550L400 600M37 640L180 640L240 700M640 400L640 300Q690 260 730 300V400M700 180Q760 260 765 400T780 560M775 860L790 1040L830 1200M120 500L90 640M300 470L460 540M950 110L1100 90M1180 930L1507 850M940 1160Q1060 1150 1200 1040T1480 880M1300 1100L1430 1298M960 240L1120 250M950 400L1050 410M900 560L1200 640M1050 600L1030 760M1120 620L1100 780" />
        </g>
        <g fill="none" stroke="#959595">
          <path d="M275 43Q280 90 300 100L400 150Q460 190 525 195" strokeWidth="9" />
          <path d="M605 43L560 120Q520 180 525 230L545 270M560 130L600 130L600 160M555 160Q580 170 580 200" strokeWidth="8" />
          <path d="M540 280L500 370L497 570L480 610L270 885L235 990L150 1220L120 1298" strokeWidth="9" />
          <path d="M270 885L400 880L680 848L780 852L860 835L960 820L1100 800L1270 778" strokeWidth="9" />
          <path d="M37 1195L130 1215L200 1250L460 1255Q550 1265 600 1298" strokeWidth="8" />
          <path d="M780 43L785 160Q800 220 810 240M1507 95Q1400 130 1310 128Q1120 110 1050 120Q930 130 850 190Q800 240 803 330V540Q805 640 850 720L900 840Q935 900 935 980L928 1298" strokeWidth="16" />
          <path d="M840 730L790 780L775 852M870 1298H930" strokeWidth="10" />
          <circle cx="875" cy="723" r="15" strokeWidth="3" />
        </g>
        <path d="M1155 147L1310 155L1340 180L1350 215L1400 240L1480 235L1507 250V605L1400 700L1395 670L1330 700L1348 710V750L1290 775L1205 785V625L1145 620L1135 600L1022 592L1048 490L1042 465L1065 410L1085 415L1110 330L1125 258L1165 258L1195 230Z" fill="url(#hatch)" stroke="#4a8b5a" strokeWidth="3" />
        <path d="M1308 528L1355 480L1388 500L1325 548Z" fill="#eeece6" />
        <path d="M1440 540L1495 480L1507 500V560L1490 580Z" fill="#9ccc90" />
        <g fill="#7fb27e">
          <path d="M480 610L495 565L550 560L575 530L625 575L655 590L670 640L635 720L560 690L500 660Z" /><path d="M248 622L320 618L342 660L330 695L284 715L275 670L250 655Z" />
          <path d="M1072 43H1175V100L1072 92Z" /><path d="M1238 100L1290 72L1302 110L1250 108Z" />
          <path d="M37 905L75 900L90 970L215 980L230 1000V1040L180 1050L122 1088L70 1050L50 960Z" /><path d="M230 895L315 885L305 1040H230L245 940Z" />
          <path d="M37 765L70 735L37 825ZM37 1195L75 1200L65 1260L37 1298Z" /><path d="M1100 805L1175 800V850L1198 880L1170 920V1040L1120 1065L1078 1050V960L1080 920L1052 915L1060 872H1100Z" />
          <path d="M1312 1165L1375 1115L1412 1120L1350 1200ZM690 1165L740 1185L735 1215L685 1200ZM950 640L982 630L978 660L950 655ZM660 328L690 322L685 342L665 340ZM560 490L590 480L600 540L575 530Z" />
        </g>
        <path d="M140 690L145 710L183 708V735L140 740L130 760Z" fill="#6f9348" />
        <g fill="#daf8c0" stroke="#aede93" strokeWidth="3">
          <path d="M350 150L398 155L385 235L402 260L398 320L368 365L320 350L312 310L295 265L345 220Z" /><path d="M590 475L735 415L747 470L742 570H635L605 515Z" />
          <path d="M75 897L228 895V978L90 970Z" /><path d="M1370 570L1400 550L1422 565L1408 650L1385 685L1340 688L1325 700L1330 615Z" />
          <path d="M1068 800L1110 800L1100 872L1060 872Z" /><path d="M495 912L540 910L542 945L520 958L495 945Z" />
          <path d="M978 1020L1005 1010L1035 1020L1045 1075L1020 1060L978 1062Z" /><path d="M37 1135L80 1098L112 1130L108 1190L37 1190Z" /><path d="M1010 68L1072 65V95L1020 105Z" />
          <path d="M415 1258H432V1285H415ZM592 1172L610 1170L615 1190L597 1192ZM332 1016H344V1030H332ZM542 1165H556V1185H542ZM900 385L928 390L922 400H900Z" />
        </g>
        <path d="M1430 1298L1460 1210L1507 1205V1298Z" fill="#5c9a50" />
        <path d="M290 1145L312 1148V1167L292 1163Z" fill="#38805c" />
        <g fill="#fff" stroke="#8d8d8d" strokeWidth="5">
          <rect x="465" y="377" width="64" height="58" rx="9" /><rect x="753" y="766" width="72" height="56" rx="9" /><rect x="387" y="848" width="45" height="55" rx="9" />
          <path d="M858 812H950V826H858ZM858 832H952Q960 870 905 890Q850 870 858 832Z" />
        </g>
      </g>
      <g fontFamily="Liberation Sans, sans-serif" fill="#6d6d6d" stroke="#fff" strokeWidth="3" paintOrder="stroke">
        <MapText place={p} x={497} y={418} size={17}>12</MapText>
        <MapText place={p} x={789} y={808} size={17}>70</MapText>
        <MapText place={p} x={410} y={888} size={17}>9</MapText>
        <MapText place={p} x={905} y={870} size={15}>290</MapText>
        <g letterSpacing="1">
          <MapText place={p} x={548} y={320} rotate={-63} anchor="start" fill="#555">Gold Star Bl</MapText>
          <MapText place={p} x={460} y={740}>WPI</MapText>
          <MapText place={p} x={330} y={790} rotate={7} anchor="start">Institute Rd</MapText>
          <MapText place={p} x={812} y={910} rotate={76} anchor="start">Summer St</MapText>
          <MapText place={p} x={1172} y={1205} rotate={-39} anchor="start">Franklin St</MapText>
          <MapText place={p} x={1025} y={1200}>CSX</MapText>
          <MapText place={p} x={1265} y={788} size={17} rotate={-2} anchor="start" fill="#555">Belmont St</MapText>
          <MapText place={p} x={215} y={1290} rotate={-66} anchor="start">on St</MapText>
        </g>
        <MapText place={p} x={1340} y={62} size={16} rotate={-30}>L</MapText>
      </g>
      <g fontFamily="Liberation Sans, sans-serif" fill="#777" letterSpacing="1">
        <MapText place={p} x={612} y={453} anchor="start">R<tspan fill="#b6d2a0">ural</tspan></MapText>
        <MapText place={p} x={563} y={510} anchor="start">C<tspan fill="#b6d2a0">emete</tspan>ry</MapText>
        <MapText place={p} x={565} y={588} fill="#6d9a6c">Institute</MapText>
        <MapText place={p} x={570} y={645} fill="#6d9a6c">Park</MapText>
        <MapText place={p} x={132} y={1000} fill="#6d9a6c">Elm</MapText>
        <MapText place={p} x={132} y={1048} fill="#6d9a6c">Park</MapText>
        <MapText place={p} x={1420} y={322} fill="#42795a">Memori</MapText>
        <MapText place={p} x={1140} y={880} fill="#6d9a6c">Hill</MapText>
      </g>
      <MapText place={p} x={588} y={1137} size={32} fontFamily="Liberation Serif, serif" fontWeight="700" fill="#444" letterSpacing="2" stroke="#fff" strokeWidth="4" paintOrder="stroke">Worcester</MapText>
    </CardMap>
  );
};

const hydrants = [
  [698, 52], [350, 139], [690, 159], [106, 110], [1252, 115], [1345, 87], [905, 269], [1090, 273], [472, 306], [375, 333], [618, 308], [747, 438], [575, 457], [311, 535],
  [343, 588], [547, 535], [75, 538], [900, 580], [1002, 603], [1074, 601], [507, 675], [518, 706], [543, 720], [52, 718], [106, 743], [150, 825], [242, 838], [414, 862],
  [568, 796], [371, 948], [270, 994], [526, 1060], [762, 1084], [831, 901], [1090, 795], [1159, 752], [1505, 853], [1141, 1077], [1418, 1061], [972, 1124], [1320, 1275], [1418, 1251],
  [905, 1270], [300, 1220],
];
const basins = [
  [73, 48], [110, 52], [318, 181], [622, 128], [660, 137], [590, 142], [588, 166], [837, 215], [887, 214], [872, 253], [1028, 307], [1048, 282], [1102, 84], [1142, 94], [1093, 52], [1210, 94], [1391, 122],
  [1466, 112], [1450, 98], [1502, 223], [80, 256], [73, 311], [48, 265], [332, 297], [543, 315], [519, 340], [543, 373], [607, 326], [577, 433], [514, 470], [724, 470], [793, 470], [930, 531], [979, 531],
  [920, 556], [995, 572], [1072, 633], [1107, 620], [1151, 648], [1137, 711], [1167, 724], [485, 576], [470, 620], [431, 716], [475, 736], [538, 765], [642, 784], [618, 814], [711, 824], [700, 861],
  [754, 856], [857, 918], [857, 957], [1093, 818], [1111, 837], [1034, 933], [1063, 913], [358, 866], [323, 894], [92, 489], [73, 499], [50, 410], [46, 370], [46, 460], [1353, 1006], [1381, 1020], [695, 1150], [665, 1180],
  [975, 1173], [955, 1171], [292, 1172], [285, 1204], [284, 1281], [103, 1247], [132, 1266], [44, 1238], [1160, 1208], [1142, 1198], [1252, 1217], [1288, 1208], [1303, 1188], [1489, 1290], [1366, 1294], [724, 1302],
];

const HydrantsMap = () => {
  const p = at(42);
  const streets = "M90 85L270 100L590 155M640 170L860 250L1040 300M1130 60L1100 260L975 510M640 440L930 540L1120 640L1320 740L1512 800M310 550L470 600M340 600L240 820M42 770L150 830L320 890L700 1150M560 800L430 1010M830 940L690 1180L640 1298M1150 680L1150 760L1080 900L1045 960V1020L960 1140M1512 420L1350 750M1512 840L1400 1100L1300 1200M42 380L110 560L120 640L90 740L42 960M940 43L890 200M1470 540H1512M300 1210L440 1280M1000 1140L940 1298";
  return (
    <CardMap viewBox="0 0 600 520" preserveAspectRatio="xMidYMid slice" role="img" aria-label="Map of hydrants and catch basins">
      <rect width="600" height="520" fill="#e6e6e6" />
      <g transform={`scale(${CX} ${CY}) translate(-42 -43)`} strokeLinejoin="round">
        <g fill="#d6d6d4" stroke="#c6c6c4" strokeWidth="3">
          <path d="M240 43H640L600 135L470 120L240 90Z" /><path d="M700 43H900L870 220L680 150Z" />
          <path d="M160 345L400 350V445L275 430L255 620L155 600Z" /><path d="M640 215L800 260L770 380L610 380Z" />
          <path d="M1165 140L1507 240L1425 395L1110 300Z" /><path d="M1095 345L1435 490L1340 700L1010 520Z" />
          <path d="M350 590L460 620L440 690L340 850L250 820Z" /><path d="M440 790L560 830L620 860L780 960L700 1110L560 1060L440 980Z" />
          <path d="M42 1020L300 1090L200 1230L42 1200ZM830 1000L980 1060L1010 1090L960 1200L790 1180ZM42 800L80 790L60 900L42 920ZM1200 990L1350 1000L1330 1060L1200 1040ZM1350 1100L1512 1150V1290H1380ZM600 1180L760 1180L640 1298H560ZM860 280L1000 320L940 500L820 460Z" />
        </g>
        <g fill="#f1d8d6" stroke="#e6c3c1" strokeWidth="3">
          <path d="M790 245L865 265L820 430L765 410Z" /><path d="M1085 305L1425 405L1490 250L1512 260V440L1440 490L1080 345Z" />
          <path d="M1440 400L1470 320L1500 330L1450 430Z" /><path d="M1205 525L1290 550L1240 680L1160 630Z" />
          <path d="M1165 755L1255 785L1170 965L1100 930Z" /><path d="M1260 730L1490 820L1400 960L1210 890Z" /><path d="M1440 560L1512 590V790L1365 740Z" />
          <path d="M1480 860L1512 880V1090L1410 1070ZM1180 43H1470L1450 90L1200 43ZM310 1115L460 1150L470 1210L320 1210ZM1010 1130L1150 1170L1100 1260L980 1290ZM180 1170L260 1190L240 1298H170Z" />
        </g>
        <path d="M930 43H1090L1060 140L990 110L975 150L920 125Z" fill="#e0cdec" />
        <path d="M280 430L400 450L560 450L470 600L300 555L255 545Z" fill="#f8f6ee" />
        <path d="M42 640L75 650L60 730L42 720Z" fill="#dfcfe9" />
        <path d="M145 620L270 600L300 560L320 590L250 710L140 680ZM100 835L180 850L120 985L65 960Z" fill="#ece9cb" stroke="#dcd8b2" strokeWidth="3" />
        <path d="M640 435L755 480L720 600L650 755L500 700L560 490Z" fill="#ddd5cb" />
        <path d="M635 530L710 550L690 720L590 710L605 600Z" fill="#ecdac5" />
        <path d="M735 490L900 545L1140 670L1090 830L985 975L820 890L655 770L700 620Z" fill="#cfe9b4" />
        <path d="M755 500L780 510L765 560L748 550ZM690 740L708 745L690 800L672 790Z" fill="#ddd" />
        <path d="M1110 870L1130 960L1050 1060L1190 1120L1330 1170L1300 1200L1100 1110Z" fill="#f6f4ec" />
        <circle cx="1145" cy="1015" r="46" fill="#e0e0e0" stroke="#ccc" strokeWidth="3" />
        <circle cx="1145" cy="1018" r="20" fill="#ececec" stroke="#c9c9d6" strokeWidth="3" />
        <path d={streets} fill="none" stroke="#c4c4c4" strokeWidth="33" />
        <path d={streets} fill="none" stroke="#fff" strokeWidth="29" />
        <g fill="none" stroke="#9d9d9d">
          <path d="M660 43L580 340L500 600L440 780L310 1020L80 1298M90 295L350 315L580 340" strokeWidth="27" />
          <path d="M310 1000L290 1180" strokeWidth="20" />
          <path d="M490 715L570 755L620 800" strokeWidth="28" />
          <path d="M880 960L1040 1060L1290 1185L1420 1250M1040 1065L1250 1215L1380 1298" strokeWidth="22" />
          <path d="M1150 43L1300 85L1512 185" strokeWidth="40" />
        </g>
      </g>
      <g fontFamily="Liberation Sans, sans-serif" fill="#777" stroke="#f4f4f4" strokeWidth="3" paintOrder="stroke" letterSpacing="1">
        {[[448, 277, "Lower"], [440, 322, "Pleasant"], [440, 368, "Street"], [450, 415, "District"], [657, 600, "Worcester"], [657, 645, "City"], [660, 692, "Hall"],
          [872, 692, "Worcester"], [870, 736, "Common"], [935, 812, "City Hall"], [935, 866, "Common"], [372, 727, "Denholm"], [378, 774, "Building"],
          [360, 1116, "Hanover"], [360, 1164, "Theatre"], [360, 1208, "for the"], [358, 1256, "Performing Arts"], [1375, 615, "City Square"], [1000, 1302, "Public"],
          [68, 590, "ng"], [68, 640, "ng"], [60, 692, "er"], [1500, 478, "B"]].map(([x, y, t]) => (
          <MapText key={t + x + y} place={p} x={x} y={y} size={17}>{t}</MapText>
        ))}
        <MapText place={p} x={270} y={130} rotate={8} anchor="start">Pearl St</MapText>
        <MapText place={p} x={662} y={195} rotate={17} anchor="start">Mechanic St</MapText>
        <MapText place={p} x={1140} y={665} rotate={29} anchor="start">Front St</MapText>
        <MapText place={p} x={640} y={815} rotate={37} anchor="start" fill="#555">Franklin S</MapText>
        <MapText place={p} x={465} y={985} rotate={-62} anchor="start">Allen Ct</MapText>
        <MapText place={p} x={1365} y={1135} rotate={-62} anchor="start">Trumbull St</MapText>
        <MapText place={p} x={1075} y={930} rotate={-66} anchor="start">shburn S</MapText>
        <MapText place={p} x={70} y={400} rotate={-83} anchor="start">Chestnut St</MapText>
        <MapText place={p} x={655} y={1298} rotate={-63} anchor="start">rtland St</MapText>
        <MapText place={p} x={62} y={965} rotate={-85} anchor="start">on St</MapText>
      </g>
      <MapText place={p} x={782} y={428} size={32} fontFamily="Liberation Serif, serif" fontWeight="700" fill="#444" letterSpacing="2" stroke="#fff" strokeWidth="4" paintOrder="stroke">Worcester</MapText>
      {hydrants.map(([x, y], i) => {
        const [a, b] = p(x, y);
        return (
          <g key={i}>
            <path d={`M${a - 8} ${b}H${a + 8}M${a} ${b - 8}V${b + 8}`} stroke="#1c1111" strokeWidth="4.5" />
            <path d={`M${a - 6} ${b}H${a + 6}M${a} ${b - 6}V${b + 6}`} stroke="#cf2620" strokeWidth="6" />
            <rect x={a - 4} y={b - 4} width="8" height="8" fill="#cf2620" />
            <circle cx={a} cy={b} r="1.5" fill="#8f0f0c" />
          </g>
        );
      })}
      {basins.map(([x, y], i) => {
        const [a, b] = p(x, y);
        return (
          <g key={i}>
            <rect x={a - 6} y={b - 6} width="12" height="12" fill="#e9ecf6" stroke="#6478c2" strokeWidth="2" />
            <path d={`M${a - 3} ${b - 2}h6M${a - 3} ${b + 2}h6`} stroke="#a9b3d8" strokeWidth="2" />
          </g>
        );
      })}
    </CardMap>
  );
};

const MapCard = ({ title, children }) => (
  <figure>
    <MapFrame>
      {children}
      <ZoomStack>
        <ZoomButton aria-label="Zoom in"><Plus /></ZoomButton>
        <ZoomButton aria-label="Zoom out"><Minus /></ZoomButton>
      </ZoomStack>
      <Credit>City of Worcester, …</Credit>
      <EsriMark>esri</EsriMark>
    </MapFrame>
    <Larger href="#map">View larger map</Larger>
    <Caption>{title}</Caption>
  </figure>
);

const Links = ({ items }) =>
  items.map((t, i) => (
    <React.Fragment key={t}>
      {i > 0 && " | "}
      <Link href="#item">{t}</Link>
    </React.Fragment>
  ));

const dataRows = [
  ["Buildings"],
  ["Census Blocks 2010", "Census Block Groups 2010", "Census Tracts 2010"],
  ["Open Space", "FEMA Flood Zones 2011"],
  ["Precincts", "Polling Locations"],
  ["Street Centerlines", "Street Name Table", "Highway Exits"],
  ["Zoning", "Zoning Overlays"],
];
const printable = [["City Council Districts"], ["City-Wide Ward-Precinct Map"], ["Individual Precinct Maps"], ["Street Map"], ["Zoning"], ["Zoning Overlays"]];

export default function App() {
  return (
    <Page>
      <GlobalStyle />
      <TopBar>
        <Brand $inset={26}>
          <BrandLogo viewBox="-14 -10 204 196" role="img" aria-label="City of Worcester seal"><Seal id="head" ring="#c8a65a" /></BrandLogo>
          <BrandTitle>GIS Data - City of Worcester, MA</BrandTitle>
        </Brand>
      </TopBar>
      <SearchBar>
        <SearchRow $inset={26}>
          <SearchBox>
            <SearchInput type="text" placeholder="Search for open data" aria-label="Search for open data" />
            <Lens color="#aaa" size={34} />
          </SearchBox>
          <Within><Tick type="checkbox" />SEARCH WITHIN MAP</Within>
          <Activity>My Activity</Activity>
        </SearchRow>
      </SearchBar>
      <MapHero>
        <RegionMap />
        <HeroOverlay>
          <HeroTools>
            <LeftTools>
              <ToolRow>
                <ButtonPair>
                  <PairButton aria-label="Zoom out"><Minus w={18} /></PairButton>
                  <PairButton aria-label="Zoom in"><Plus /></PairButton>
                </ButtonPair>
                <LocateButton aria-label="Find a place"><Lens color="#444" /></LocateButton>
              </ToolRow>
              <Attribution>Esri, HERE, DeLorme, MapmyIndia, © OpenStreetMap contributors, and the GIS user community</Attribution>
            </LeftTools>
            <Basemap>
              <BasemapButton $active>MAP</BasemapButton>
              <Bar>|</Bar>
              <BasemapButton>SATELLITE</BasemapButton>
              <SizeButton $h={22} aria-label="Small map" />
              <SizeButton $h={32} $active aria-label="Medium map" />
              <SizeButton $h={42} aria-label="Large map" />
            </Basemap>
          </HeroTools>
        </HeroOverlay>
      </MapHero>
      <Container as="main">
        <Columns $min={624}>
          <section>
            <Heading $after={31}>Geospatial Data Library</Heading>
            <Para>
              Welcome to the <Link href="#home">open data homepage</Link> for the City of Worcester, MA<br />
              created by the <Link href="#gis">GIS Section</Link> of Technical Services.
            </Para>
            <Para>
              Data are available for download in the following formats: CSV file, KML or ESRI’s shapefile format.<br />
              API support is available with a GeoJSON or GeoService.
            </Para>
            <Para>Printable and interactive maps can also be accessed from this site.</Para>
            <Para>© 2016 <Links items={["City of Worcester, MA", "Contact Us", "Terms of Use", "Help"]} /></Para>
          </section>
          <section>
            <Heading $after={30}>Data</Heading>
            <LinkList>{dataRows.map((r) => <li key={r[0]}><Links items={r} /></li>)}</LinkList>
          </section>
        </Columns>
        <Columns $min={1142}>
          <section>
            <Heading $after={98}>Interactive Maps</Heading>
            <Cards>
              <MapCard title="Parks & Open Space"><ParksMap /></MapCard>
              <MapCard title="Hydrants & Catch Basins"><HydrantsMap /></MapCard>
            </Cards>
          </section>
          <section>
            <Heading $after={74}>Printable Maps</Heading>
            <LinkList>{printable.map((r) => <li key={r[0]}><Links items={r} /></li>)}</LinkList>
          </section>
        </Columns>
      </Container>
      <Foot>
        <FootRow>
          <FootLogo viewBox="0 0 600 170" role="img" aria-label="City of Worcester Geographic Information System">
            <Seal id="foot" ring="#75642f" />
            <g fontFamily="Liberation Sans, sans-serif" fill="#665432">
              <text x="189" y="116" fontSize="17" transform="rotate(-90 189 116)">CITY OF</text>
              <text x="194" y="95" fontSize="61" fontWeight="700">WORCESTER</text>
              <text x="201" y="124" fontSize="25" fontWeight="700">Geographic Information System</text>
            </g>
          </FootLogo>
          <FootText>
            <Heading $after={30}>Data Disclaimer</Heading>
            <Para>
              Considerable effort has been made to ensure the accuracy, correctness and timeliness of data presented; however, this information<br />
              is only as accurate as its sources and may not reflect the most current information. The City of Worcester, MA assumes no liability
            </Para>
          </FootText>
        </FootRow>
      </Foot>
    </Page>
  );
}
